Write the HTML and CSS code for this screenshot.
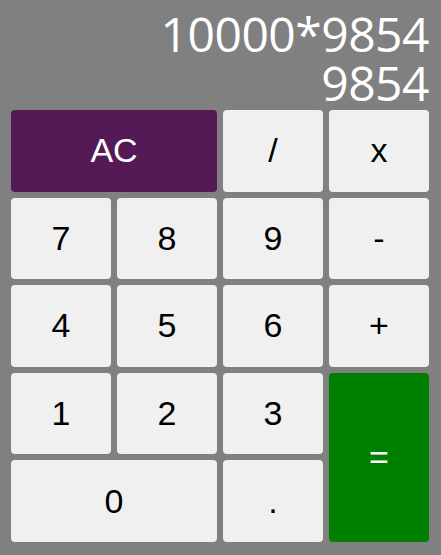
FILE: index.html
```html
<!DOCTYPE html>
<html>
<head>
<meta charset="utf-8">
<link rel="stylesheet" href="styles.css">
</head>
<body>
<div class="calc">
  <div class="display">
    <div class="line">10000*9854</div>
    <div class="line">9854</div>
  </div>
  <div class="keys">
    <button class="key ac span2">AC</button>
    <button class="key">/</button>
    <button class="key">x</button>
    <button class="key">7</button>
    <button class="key">8</button>
    <button class="key">9</button>
    <button class="key">-</button>
    <button class="key">4</button>
    <button class="key">5</button>
    <button class="key">6</button>
    <button class="key">+</button>
    <button class="key">1</button>
    <button class="key">2</button>
    <button class="key">3</button>
    <button class="key eq">=</button>
    <button class="key span2">0</button>
    <button class="key">.</button>
  </div>
</div>
</body>
</html>
```
FILE: styles.css
```css
html, body {
  margin: 0;
  padding: 0;
  background: #808080;
}
.calc {
  width: 441px;
  height: 555px;
  box-sizing: border-box;
  padding: 9px 12px 13px 11px;
  display: flex;
  flex-direction: column;
}
.display {
  color: #ffffff;
  font-family: "Open Sans", sans-serif;
  font-size: 48px;
  line-height: 49px;
  text-align: right;
  margin-bottom: 3px;
  letter-spacing: -0.5px;
}
.line {
  height: 49px;
  white-space: nowrap;
}
.keys {
  display: grid;
  grid-template-columns: repeat(4, 100px);
  grid-template-rows: repeat(5, 81.6px);
  gap: 6px;
}
.key {
  border: none;
  margin: 0;
  padding: 0;
  border-radius: 4px;
  background: #f0f0f0;
  color: #000000;
  font-family: "Liberation Sans", Arial, sans-serif;
  font-size: 34px;
  display: flex;
  align-items: center;
  justify-content: center;
}
.span2 {
  grid-column: span 2;
}
.ac {
  background: #541a55;
  color: #ffffff;
}
.eq {
  grid-row: span 2;
  background: #008000;
  color: #ffffff;
}
```
